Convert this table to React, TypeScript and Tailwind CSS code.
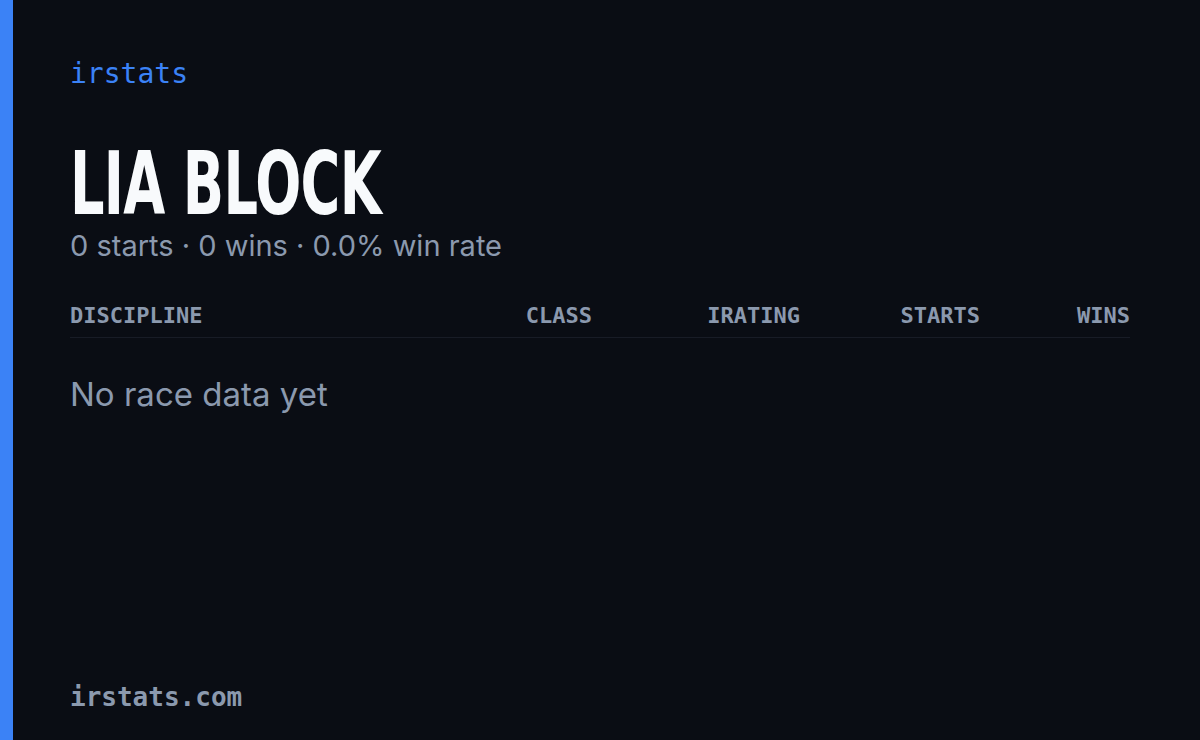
import React from "react";

const columns = [
  { label: "DISCIPLINE", align: "text-left" },
  { label: "CLASS", align: "text-right" },
  { label: "IRATING", align: "text-right" },
  { label: "STARTS", align: "text-right" },
  { label: "WINS", align: "text-right" },
];

const mono = "font-['DejaVu_Sans_Mono',monospace]";

const App: React.FC = () => {
  return (
    <div className="flex h-[740px] w-[1200px] bg-[#0a0d14] overflow-hidden">
      <div className="w-[13px] shrink-0 bg-[#3b82f6]" />
      <div className="flex flex-1 flex-col pl-[57px] pr-[70px] pt-[56px] pb-[26px]">
        <div className={`${mono} text-[28px] leading-[36px] text-[#3b82f6]`}>
          irstats
        </div>

        <h1 className="mt-[52px] origin-left scale-x-[0.685] font-['DejaVu_Sans_Condensed',sans-serif] text-[88px] font-bold leading-[80px] tracking-[-1px] text-[#f8fafc]">
          LIA BLOCK
        </h1>
        <p className="mt-[4px] font-['Inter',sans-serif] text-[29px] leading-[36px] text-[#8b99ae]">
          0 starts · 0 wins · 0.0% win rate
        </p>

        <div className="mt-[38px]">
          <div
            className={`grid grid-cols-[1fr_120px_208px_180px_150px] border-b border-[#181c26] pb-[7px] ${mono} text-[22px] font-bold leading-[28px] text-[#8b99ae]`}
          >
            {columns.map((c) => (
              <div key={c.label} className={c.align}>
                {c.label}
              </div>
            ))}
          </div>
          <p className="mt-[36px] font-['Inter',sans-serif] text-[33px] leading-[40px] text-[#8b99ae]">
            No race data yet
          </p>
        </div>

        <div className={`mt-auto ${mono} text-[26px] font-bold leading-[34px] text-[#8b99ae]`}>
          irstats.com
        </div>
      </div>
    </div>
  );
};

export default App;
